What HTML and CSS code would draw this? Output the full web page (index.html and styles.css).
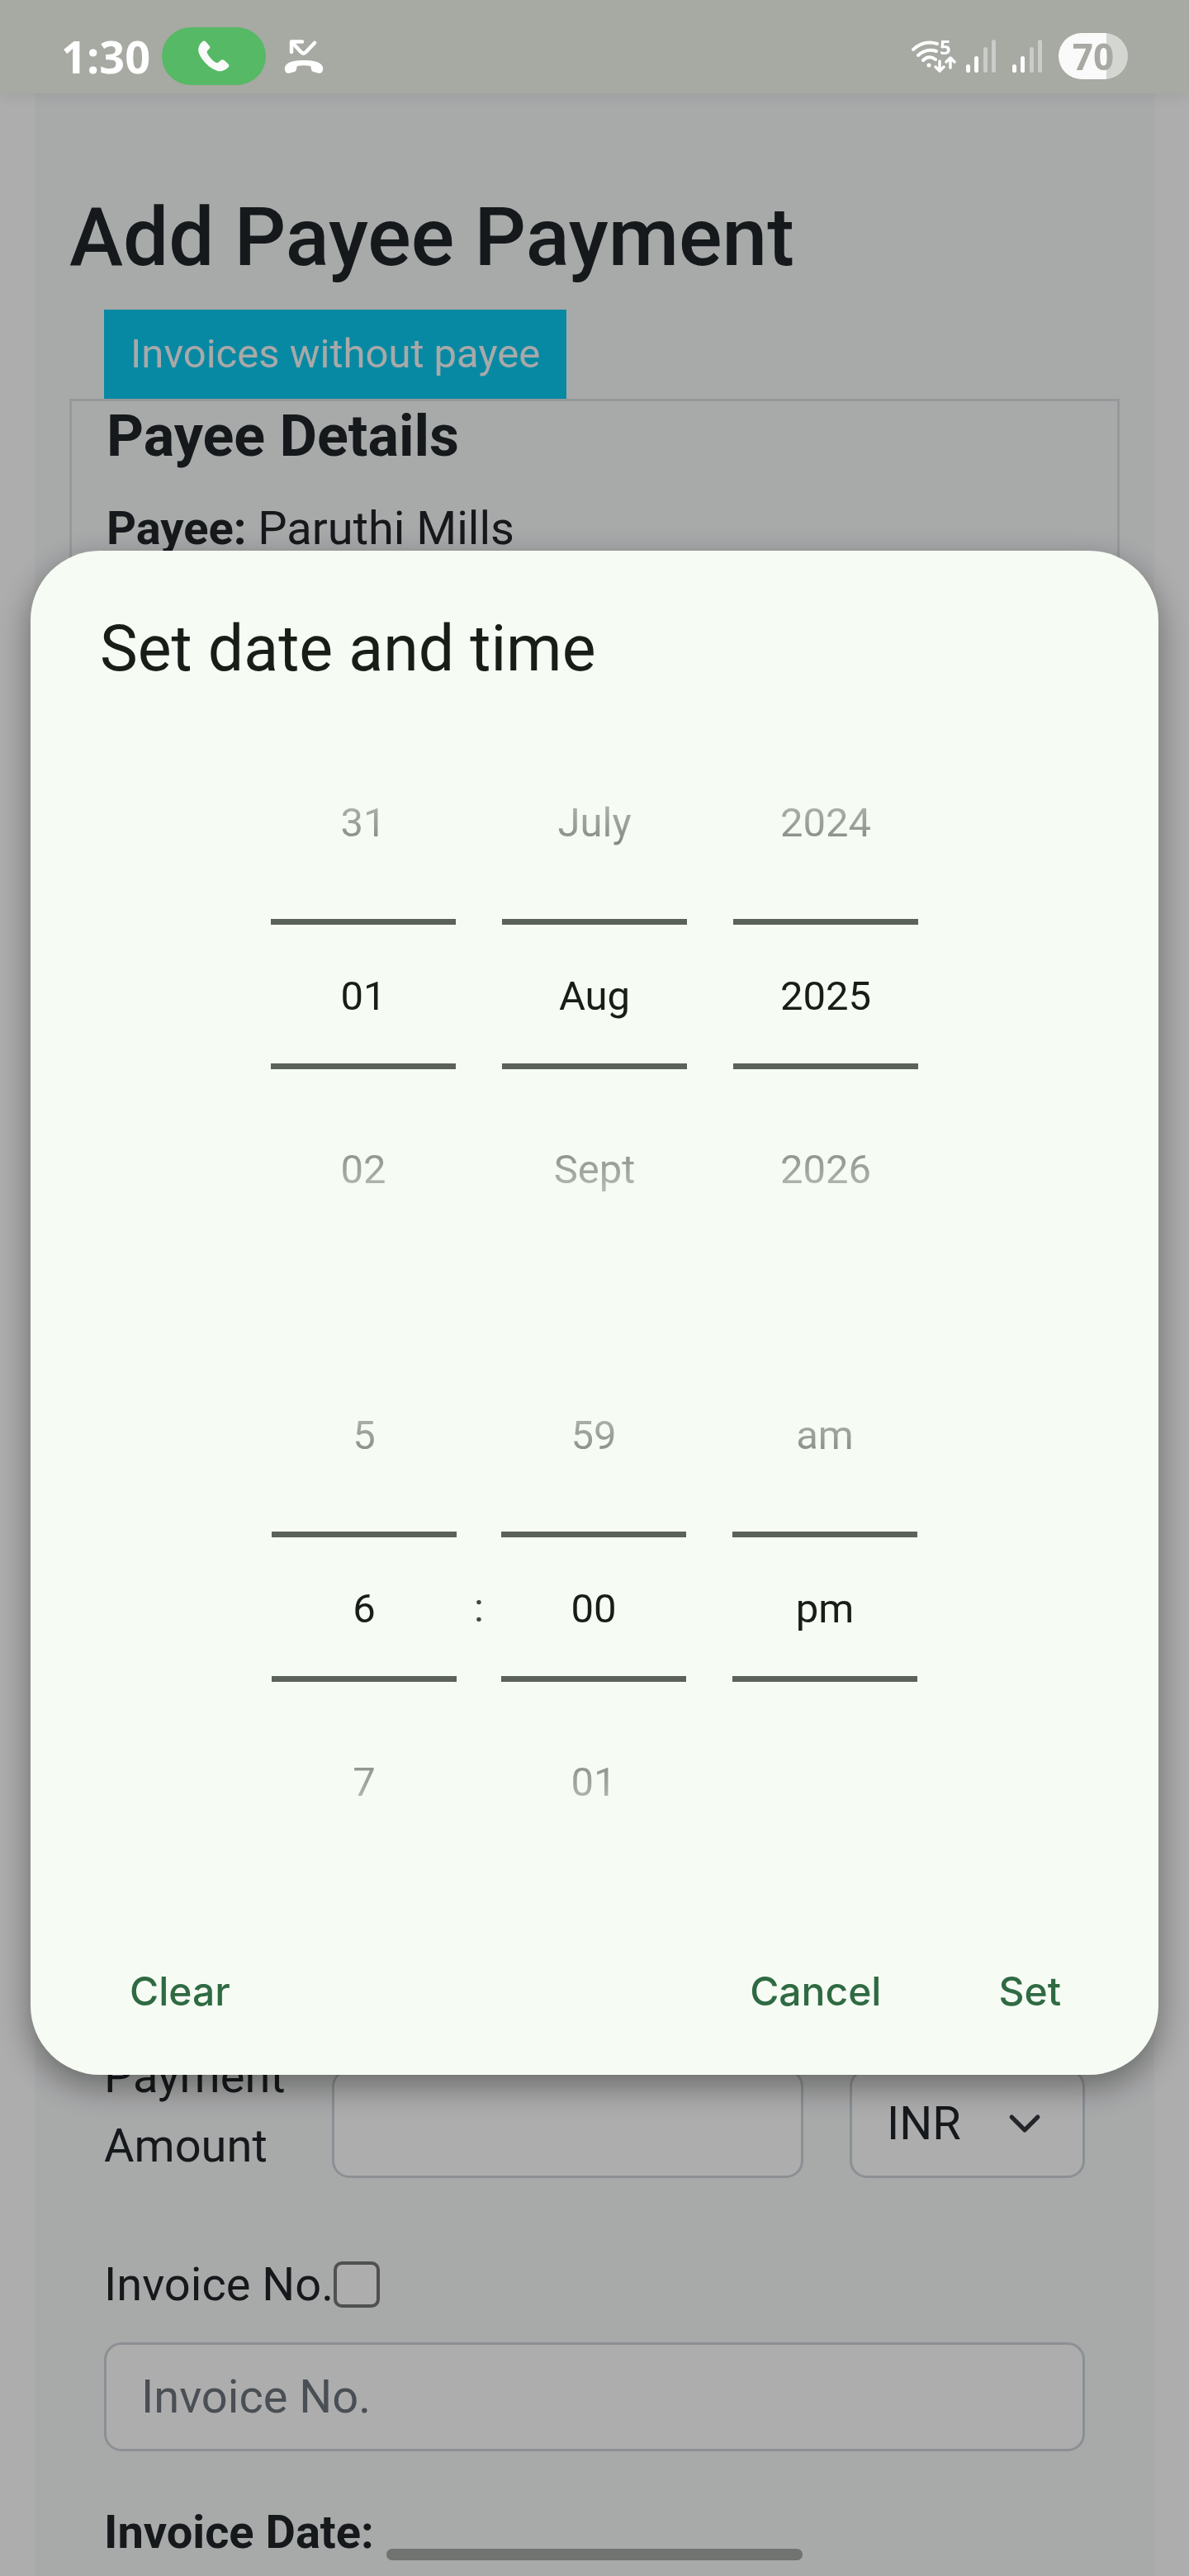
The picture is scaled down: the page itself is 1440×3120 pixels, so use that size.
FILE: index.html
```html
<!DOCTYPE html>
<html lang="en">
<head>
    <meta charset="UTF-8">
    <meta name="viewport" content="width=device-width, initial-scale=1.0">
    <title>Add Payee Payment</title>
    <link rel="stylesheet" href="styles.css">
</head>
<body>
    <main class="container">
        <h1>Add Payee Payment</h1>
        <button type="button" class="btn-info">Invoices without payee</button>

        <section class="payee-card">
            <h2>Payee Details</h2>
            <p><strong>Payee:</strong> Paruthi Mills</p>
        </section>

        <form class="payment-form">
            <div class="payment-row">
                <label for="amount">Payment Amount</label>
                <input type="text" id="amount" class="form-control">
                <select class="form-control form-select" aria-label="Currency">
                    <option>INR</option>
                </select>
            </div>
            <div class="check-row">
                <label for="has-invoice">Invoice No.</label>
                <input type="checkbox" id="has-invoice" class="form-check">
            </div>
            <input type="text" class="form-control" placeholder="Invoice No." aria-label="Invoice No.">
            <p class="invoice-date"><strong>Invoice Date:</strong></p>
        </form>
    </main>

    <!-- Date and time dialog -->
    <div class="backdrop">
        <div class="dialog" role="dialog" aria-labelledby="dialog-title">
            <h2 id="dialog-title" class="dialog-title">Set date and time</h2>

            <div class="pickers date-pickers">
                <div class="picker">
                    <button type="button" class="prev">31</button>
                    <button type="button" class="current">01</button>
                    <button type="button" class="next">02</button>
                </div>
                <div class="picker">
                    <button type="button" class="prev">July</button>
                    <button type="button" class="current">Aug</button>
                    <button type="button" class="next">Sept</button>
                </div>
                <div class="picker">
                    <button type="button" class="prev">2024</button>
                    <button type="button" class="current">2025</button>
                    <button type="button" class="next">2026</button>
                </div>
            </div>

            <div class="pickers time-pickers">
                <div class="picker">
                    <button type="button" class="prev">5</button>
                    <button type="button" class="current">6</button>
                    <button type="button" class="next">7</button>
                </div>
                <span class="colon">:</span>
                <div class="picker">
                    <button type="button" class="prev">59</button>
                    <button type="button" class="current">00</button>
                    <button type="button" class="next">01</button>
                </div>
                <div class="picker period">
                    <button type="button" class="prev">am</button>
                    <button type="button" class="current">pm</button>
                </div>
            </div>

            <div class="actions">
                <button type="button" class="clear">Clear</button>
                <button type="button">Cancel</button>
                <button type="button">Set</button>
            </div>
        </div>
    </div>

    <!-- Phone status bar -->
    <header class="status-bar">
        <span class="time">1:30</span>
        <span class="call-pill">
            <svg width="38" height="38" viewBox="0 0 38 38" fill="#fafafa">
                <path d="M5 1.500Q7-.5 9.300 1.500L13.500 6.500Q15.200 8.500 13.500 10L11.600 12Q10 13.500 11.200 15.800Q14.500 22.500 21 26.500Q23.200 27.800 24.800 26.200L27.500 24Q29.500 22.500 31.500 24L36 28Q38.500 30.300 36.500 32.500Q31 38 24.500 37.200Q17 36 8.500 27Q.5 18 .2 12Q0 6 5 1.500z"/>
            </svg>
        </span>
        <svg class="missed-call" width="48" height="41" viewBox="0 0 48 41" fill="#fff">
            <path d="M9 15V2.500h13M10 3.500l10.500 11.500q3 3 6 0L37 4" fill="none" stroke="#fff" stroke-width="4.500" stroke-linecap="round" stroke-linejoin="round"/>
            <path d="M24 25Q8 25 3 30Q-.5 34 1.500 38.500Q3 41.500 7 40.500L13 38.800Q15 38.200 15 36L15.500 33Q15.800 32 17 31.800Q24 30.800 31 31.800Q32.200 32 32.500 33L33 36Q33 38.200 35 38.800L41 40.500Q45 41.500 46.500 38.500Q48.500 34 45 30Q40 25 24 25z"/>
        </svg>

        <span class="status-right">
            <svg class="wifi" width="54" height="56" viewBox="0 -8 54 56" fill="none" stroke="#fff" stroke-width="4" stroke-linecap="round" stroke-linejoin="round">
                <path d="M2 12Q15 0 31 5M8 19Q18 10 30 14M14 25Q21 18 29 24"/>
                <circle cx="21" cy="31" r="2.500" fill="#fff" stroke="none"/>
                <path d="M34 26v11M29 33l5 5 5-5M47 34V22M42 27l5-5 5 5" stroke-width="3.500"/>
                <text x="34" y="18" class="wifi-band">5</text>
            </svg>
            <svg class="signal" width="37" height="40" viewBox="0 0 37 40">
                <rect x="0" y="30" width="5" height="10" rx="2.500" fill="#fff"/>
                <rect x="10" y="20" width="5" height="20" rx="2.500" fill="#fff"/>
                <rect x="21" y="9" width="5" height="31" rx="2.500" fill="#cbccc9"/>
                <rect x="31" y="0" width="5" height="40" rx="2.500" fill="#cbccc9"/>
            </svg>
            <svg class="signal" width="37" height="40" viewBox="0 0 37 40">
                <rect x="0" y="30" width="5" height="10" rx="2.500" fill="#fff"/>
                <rect x="10" y="20" width="5" height="20" rx="2.500" fill="#fff"/>
                <rect x="21" y="9" width="5" height="31" rx="2.500" fill="#cbccc9"/>
                <rect x="31" y="0" width="5" height="40" rx="2.500" fill="#cbccc9"/>
            </svg>
            <span class="battery">70</span>
        </span>
    </header>

    <div class="home-bar"></div>
</body>
</html>
```
FILE: styles.css
```css
* {
    box-sizing: border-box;
}

body {
    margin: 0;
    padding: 0 42px;
    background-color: #fff;
    color: #212529;
    font-family: Roboto, sans-serif;
    font-size: 56px;
    line-height: 84px;
}

h1, h2, p {
    margin: 0;
}

button, input, select {
    font-family: inherit;
    font-size: inherit;
    color: inherit;
}

button {
    border: none;
    background: none;
    cursor: pointer;
}

/* Page behind the dialog */
.container {
    display: flex;
    flex-direction: column;
    min-height: 100vh;
    padding: 228px 42px 11px;
    background-color: #f8f9fa;
}

h1 {
    margin-bottom: 28px;
    font-size: 98px;
    font-weight: 500;
    line-height: 119px;
}

.btn-info {
    align-self: flex-start;
    margin-left: 42px;
    padding: 17px 32px;
    background-color: #0dcaf0;
    color: #f8f9fa;
    font-size: 49px;
    line-height: 74px;
}

.payee-card {
    flex: 1;
    margin-bottom: 42px;
    padding: 0 42px;
    border: 3px solid #dee2e6;
}

.payee-card h2 {
    margin-bottom: 28px;
    font-size: 70px;
    font-weight: 700;
    line-height: 84px;
}

.payment-form {
    padding: 0 42px;
}

.payment-row {
    display: grid;
    grid-template-columns: 220px 1fr 285px;
    column-gap: 56px;
    align-items: end;
    margin-bottom: 84px;
}

.payment-row .form-control {
    margin-bottom: 3px;
}

.form-control {
    width: 100%;
    height: 132px;
    padding: 0 42px;
    border: 3px solid #ced4da;
    border-radius: 21px;
    background-color: #fff;
}

.form-control::placeholder {
    color: #6c757d;
    opacity: 1;
}

.form-select {
    appearance: none;
    background-image: url("data:image/svg+xml,%3Csvg xmlns='http://www.w3.org/2000/svg' viewBox='0 0 16 16'%3E%3Cpath fill='none' stroke='%23343a40' stroke-linecap='round' stroke-linejoin='round' stroke-width='2' d='m2 5 6 6 6-6'/%3E%3C/svg%3E");
    background-repeat: no-repeat;
    background-position: right 49px center;
    background-size: 42px 42px;
}

.check-row {
    display: flex;
    align-items: center;
    margin-bottom: 28px;
}

.form-check {
    appearance: none;
    width: 56px;
    height: 56px;
    margin: 0;
    border: 4px solid #767676;
    border-radius: 10px;
    background-color: #fff;
}

.invoice-date {
    margin-top: 56px;
}

/* Dialog */
.backdrop {
    position: fixed;
    inset: 0;
    display: flex;
    align-items: center;
    padding: 113px 37px 53px;
    background-color: rgba(0, 0, 0, 0.32);
}

.dialog {
    flex: 1;
    padding: 73px 80px 39px;
    border-radius: 84px;
    background-color: #f6fbf4;
    color: #181d17;
    box-shadow: 0 14px 42px rgba(0, 0, 0, 0.4);
}

.dialog-title {
    margin: 0 4px 57px;
    font-size: 77px;
    font-weight: 400;
    line-height: 92px;
}

.pickers {
    display: flex;
    justify-content: center;
    font-size: 49px;
}

.date-pickers {
    gap: 56px;
    margin-bottom: 112px;
}

.time-pickers {
    margin-bottom: 87px;
}

.picker {
    display: flex;
    flex-direction: column;
    gap: 14px;
    width: 224px;
}

.picker button {
    height: 210px;
    padding: 4px 0 0;
}

.picker .current {
    height: 182px;
    border-top: 7px solid #5b6259;
    border-bottom: 7px solid #5b6259;
}

/* Values fade out away from the selected one */
.picker .prev {
    -webkit-mask-image: linear-gradient(transparent, rgba(0, 0, 0, 0.8));
    mask-image: linear-gradient(transparent, rgba(0, 0, 0, 0.8));
}

.picker .next {
    -webkit-mask-image: linear-gradient(rgba(0, 0, 0, 0.8), transparent);
    mask-image: linear-gradient(rgba(0, 0, 0, 0.8), transparent);
}

.period {
    margin-left: 56px;
}

.colon {
    align-self: center;
    width: 54px;
    padding-top: 4px;
    color: #41483f;
    text-align: center;
}

.actions {
    display: flex;
    gap: 64px;
}

.actions button {
    height: 126px;
    padding: 0 38px 0 40px;
    color: #2f6a42;
    font-family: Inter, sans-serif;
    font-size: 48px;
    font-weight: 500;
}

.actions .clear {
    margin-right: auto;
}

/* Phone status bar */
.status-bar {
    position: fixed;
    top: 0;
    left: 0;
    right: 0;
    display: flex;
    align-items: center;
    height: 113px;
    padding: 23px 74px 0;
    background-color: #a7a9a3;
    box-shadow: 0 4px 18px rgba(0, 0, 0, 0.08);
    color: #fff;
    font-family: "Open Sans", sans-serif;
    font-weight: 700;
}

.time {
    font-size: 54px;
}

.call-pill {
    display: flex;
    align-items: center;
    justify-content: center;
    width: 126px;
    height: 70px;
    margin: 0 22px 0 14px;
    border-radius: 35px;
    background-color: #56b965;
}

.status-right {
    display: flex;
    align-items: center;
    margin-left: auto;
}

.wifi {
    margin-right: 12px;
}

.wifi-band {
    fill: #fff;
    stroke: none;
    font-size: 24px;
}

.signal {
    margin-right: 19px;
}

.battery {
    width: 84px;
    height: 56px;
    border-radius: 28px;
    background: linear-gradient(to right, #fafafa 58px, #d4d6d2 58px);
    color: #a7a9a3;
    font-size: 44px;
    line-height: 56px;
    text-align: center;
}

.home-bar {
    position: fixed;
    bottom: 19px;
    left: 50%;
    width: 504px;
    height: 14px;
    margin-left: -252px;
    border-radius: 7px;
    background-color: #717371;
}
```
